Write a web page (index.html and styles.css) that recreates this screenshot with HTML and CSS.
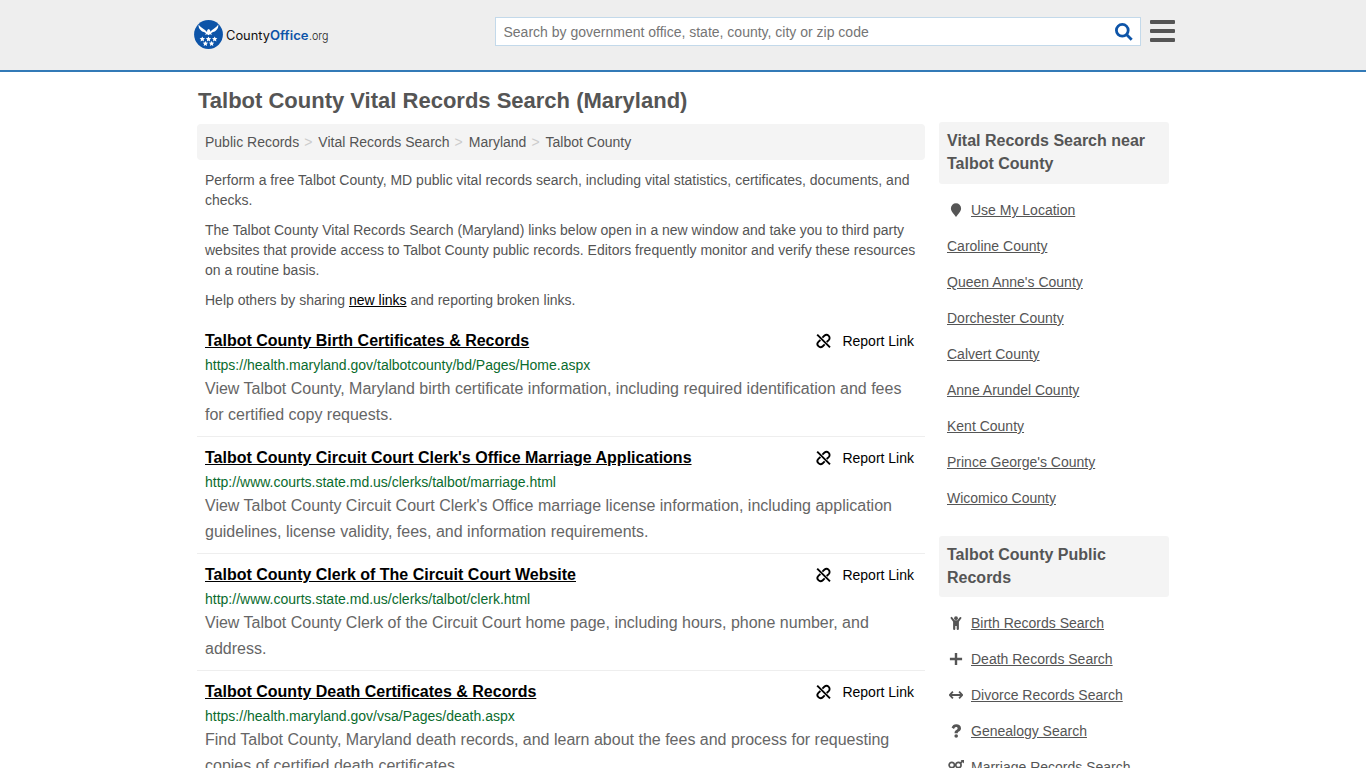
FILE: index.html
```html
<!DOCTYPE html>
<html lang="en">
<head>
  <meta charset="UTF-8">
  <title>Talbot County Vital Records Search (Maryland)</title>
  <link rel="stylesheet" href="styles.css">
</head>
<body>

  <!-- icons -->
  <svg class="sprite" xmlns="http://www.w3.org/2000/svg">
    <symbol id="unlink" viewBox="0 0 16 16">
      <g fill="none" stroke="#000" stroke-width="1.900">
        <path d="M2.200 1.600l12.800 12.800"/>
        <path d="M7.400 4.600L9.300 2.800c1.300-1.200 3.200-1.200 4.400 0s1.200 3.100 0 4.300L11.700 9"/>
        <path d="M9.700 11.400l-1.900 1.800c-1.300 1.200-3.200 1.200-4.400 0s-1.200-3.100 0-4.300L5.400 7"/>
      </g>
    </symbol>
    <symbol id="pin" viewBox="0 0 14 14"><path d="M7 .3a5.100 5.100 0 0 0-5.100 5.100c0 2.300 1.500 3.600 3.200 6.100L7 13.900l1.900-2.400c1.700-2.500 3.200-3.800 3.200-6.100A5.100 5.100 0 0 0 7 .3z"/></symbol>
    <symbol id="child" viewBox="0 0 14 14"><circle cx="7" cy="2.200" r="1.900"/><path d="M1.800 1.300a.9.9 0 0 1 1.400 0L5.600 4.200h2.800l2.400-2.900a.9.9 0 0 1 1.400 1.300L9.900 5.700v7.200a1 1 0 0 1-2.200 0V10H6.300v2.900a1 1 0 0 1-2.200 0V5.700L1.800 2.600a.9.9 0 0 1 0-1.300z"/></symbol>
    <symbol id="plus" viewBox="0 0 14 14"><path d="M5.800 1h2.400v4.800h4.900v2.400H8.200V13H5.800V8.200H.9V5.800h4.900z"/></symbol>
    <symbol id="arrows" viewBox="0 0 14 14"><path d="M3.900 3.700L.8 7l3.100 3.300M10.100 3.700L13.200 7l-3.100 3.300M1.200 7h11.600" fill="none" stroke="#555" stroke-width="1.800"/></symbol>
    <symbol id="question" viewBox="0 0 14 14"><path d="M2.600 3.500C3.500 1.400 4.900.2 7.200.2c2.700 0 4.800 1.500 4.800 4 0 3-3.200 3.200-3.200 4.600v.4H5.600v-.7c0-2.400 3-2.700 3-4.100 0-.8-.7-1.300-1.600-1.300S5.500 3.900 5 5z"/><circle cx="7.200" cy="12" r="1.800"/></symbol>
    <symbol id="genders" viewBox="0 0 16 14"><g fill="none" stroke="#555" stroke-width="1.700"><circle cx="3.800" cy="5" r="2.700"/><circle cx="10.400" cy="5" r="2.700"/><path d="M12.300 3.100L14.800 1M3.800 7.700V13M1.800 10.700h4"/></g><path d="M12.600 0H16v3.400z"/></symbol>
  </svg>

  <header class="header">
    <div class="wrap bar">
      <a class="logo" href="#">
        <svg width="140" height="30" viewBox="0 0 140 30">
          <circle cx="14.500" cy="14.500" r="14.400" fill="#0d54a8"/>
          <path fill="#fff" d="M4.600 4.600C6.300 7.200 8.600 8.500 11 9.900l2 2 .3-2 1.300-.8 1.500.9.100 1.700 1.900-1.800c2.400-1.400 4.500-2.700 6.200-5.300.2 2.100-.4 3.900-1.600 5.200-.9 1.200-2.100 1.900-3.700 2.300l-2 1.100 1.200 1.600-2.300-.5-1.400.9-1.400-.9-2.300.5 1.200-1.600-2-1.100c-1.600-.4-2.800-1.100-3.700-2.300C5 8.500 4.400 6.700 4.600 4.600z"/>
          <g fill="#fff">
            <path id="star" d="M8.300 16.400l.8 1.700 1.900.2-1.400 1.300.4 1.900-1.700-.9-1.700.9.400-1.900-1.400-1.300 1.900-.2z"/>
            <use href="#star" x="6.200"/>
            <use href="#star" x="12.400"/>
            <use href="#star" x="3.100" y="4.500"/>
            <use href="#star" x="9.300" y="4.500"/>
          </g>
          <text class="logo-text" x="32" y="20" textLength="44" lengthAdjust="spacingAndGlyphs">County</text>
          <text class="logo-text logo-blue" x="76" y="20" textLength="38.500" lengthAdjust="spacingAndGlyphs">Office</text>
          <text class="logo-text logo-org" x="115" y="20" textLength="19.500" lengthAdjust="spacingAndGlyphs">.org</text>
        </svg>
      </a>
      <form class="search">
        <input type="text" placeholder="Search by government office, state, county, city or zip code">
        <svg class="search-icon" width="18" height="18" viewBox="0 0 18 18"><circle cx="7.300" cy="7.300" r="5.900"/><path d="M11.500 11.500l5.200 5.200"/></svg>
      </form>
      <div class="menu"><span></span><span></span><span></span></div>
    </div>
  </header>

  <div class="wrap content">
    <main>
      <h1>Talbot County Vital Records Search (Maryland)</h1>
      <ul class="breadcrumb">
        <li>Public Records</li>
        <li>Vital Records Search</li>
        <li>Maryland</li>
        <li>Talbot County</li>
      </ul>
      <div class="intro">
        <p>Perform a free Talbot County, MD public vital records search, including vital statistics, certificates, documents, and checks.</p>
        <p>The Talbot County Vital Records Search (Maryland) links below open in a new window and take you to third party websites that provide access to Talbot County public records. Editors frequently monitor and verify these resources on a routine basis.</p>
        <p>Help others by sharing <a href="#">new links</a> and reporting broken links.</p>
      </div>

      <div class="record">
        <div class="record-head">
          <a href="#">Talbot County Birth Certificates &amp; Records</a>
          <span class="report"><svg width="16" height="16"><use href="#unlink"/></svg>Report Link</span>
        </div>
        <div class="url">https://health.maryland.gov/talbotcounty/bd/Pages/Home.aspx</div>
        <div class="desc">View Talbot County, Maryland birth certificate information, including required identification and fees for certified copy requests.</div>
      </div>
      <div class="record">
        <div class="record-head">
          <a href="#">Talbot County Circuit Court Clerk's Office Marriage Applications</a>
          <span class="report"><svg width="16" height="16"><use href="#unlink"/></svg>Report Link</span>
        </div>
        <div class="url">http://www.courts.state.md.us/clerks/talbot/marriage.html</div>
        <div class="desc">View Talbot County Circuit Court Clerk's Office marriage license information, including application guidelines, license validity, fees, and information requirements.</div>
      </div>
      <div class="record">
        <div class="record-head">
          <a href="#">Talbot County Clerk of The Circuit Court Website</a>
          <span class="report"><svg width="16" height="16"><use href="#unlink"/></svg>Report Link</span>
        </div>
        <div class="url">http://www.courts.state.md.us/clerks/talbot/clerk.html</div>
        <div class="desc">View Talbot County Clerk of the Circuit Court home page, including hours, phone number, and address.</div>
      </div>
      <div class="record">
        <div class="record-head">
          <a href="#">Talbot County Death Certificates &amp; Records</a>
          <span class="report"><svg width="16" height="16"><use href="#unlink"/></svg>Report Link</span>
        </div>
        <div class="url">https://health.maryland.gov/vsa/Pages/death.aspx</div>
        <div class="desc">Find Talbot County, Maryland death records, and learn about the fees and process for requesting copies of certified death certificates.</div>
      </div>
    </main>

    <aside>
      <h2>Vital Records Search near Talbot County</h2>
      <ul class="links">
        <li><svg width="14" height="14"><use href="#pin"/></svg><a href="#">Use My Location</a></li>
        <li><a href="#">Caroline County</a></li>
        <li><a href="#">Queen Anne's County</a></li>
        <li><a href="#">Dorchester County</a></li>
        <li><a href="#">Calvert County</a></li>
        <li><a href="#">Anne Arundel County</a></li>
        <li><a href="#">Kent County</a></li>
        <li><a href="#">Prince George's County</a></li>
        <li><a href="#">Wicomico County</a></li>
      </ul>
      <h2>Talbot County Public Records</h2>
      <ul class="links">
        <li><svg width="14" height="14"><use href="#child"/></svg><a href="#">Birth Records Search</a></li>
        <li><svg width="14" height="14"><use href="#plus"/></svg><a href="#">Death Records Search</a></li>
        <li><svg width="14" height="14"><use href="#arrows"/></svg><a href="#">Divorce Records Search</a></li>
        <li><svg width="14" height="14"><use href="#question"/></svg><a href="#">Genealogy Search</a></li>
        <li><svg class="wide" width="16" height="14"><use href="#genders"/></svg><a href="#">Marriage Records Search</a></li>
      </ul>
    </aside>
  </div>

</body>
</html>
```
FILE: styles.css
```css
* { box-sizing: border-box; }
body {
  margin: 0;
  height: 768px;
  overflow: hidden;
  background: #fff;
  color: #555;
  font-family: "Liberation Sans", Arial, sans-serif;
  font-size: 14px;
  line-height: 20px;
}
h1, h2, p, ul { margin: 0; padding: 0; }
ul { list-style: none; }
.sprite { display: none; }
.wrap { width: 972px; margin-left: 197px; }

/* header */
.header {
  height: 72px;
  background: #eee;
  border-bottom: 2px solid #337ab7;
}
.bar { display: flex; align-items: flex-start; width: 980px; }
.logo { flex: none; width: 301px; margin: 20px 0 0 -3px; }
.logo svg { display: block; overflow: visible; }
.logo-text { font: 12.5px Inter, sans-serif; fill: #111; }
.logo-blue { font-weight: 600; fill: #0d54a8; }
.logo-org { font-weight: 300; fill: #222; }
.search {
  display: flex;
  flex: none;
  align-items: center;
  width: 646px;
  height: 29px;
  margin-top: 17px;
  padding-right: 7px;
  background: #fff;
  border: 1px solid #c3d9ea;
}
.search input {
  flex: 1;
  padding: 0 0 0 7.5px;
  border: 0;
  outline: 0;
  background: none;
  font: 14px "Liberation Sans", Arial, sans-serif;
}
.search input::placeholder { color: #757575; }
.search-icon { fill: none; stroke: #0d54a8; stroke-width: 2.8; }
.menu {
  display: flex;
  flex-direction: column;
  gap: 5px;
  margin: 20px 0 0 9px;
}
.menu span { width: 25px; height: 4px; background: #555; border-radius: 1px; }

/* main column */
.content { display: flex; gap: 14px; }
main { width: 728px; }
h1 {
  padding: 17px 0 11px 1px;
  font-size: 22px;
  line-height: 24px;
}
.breadcrumb {
  display: flex;
  height: 36px;
  padding: 8px;
  background: #f4f4f4;
  border-radius: 4px;
}
.breadcrumb li + li::before { content: ">"; padding: 0 6px 0 5px; color: #ccc; }
.intro { padding: 10px 8px; }
.intro p { margin-bottom: 10px; }
.intro p:last-child { margin-bottom: 0; }
.intro a { color: #000; }
.record { padding: 8px 8px; border-bottom: 1px solid #eee; }
.record-head { display: flex; justify-content: space-between; height: 27px; line-height: 25px; }
.record-head a { color: #000; font-size: 16px; font-weight: bold; }
.report { display: flex; align-items: center; height: 27px; padding-right: 3px; color: #000; }
.report svg { margin: -1px 11px 0 0; }
.url { height: 21px; color: #0a6b2d; }
.desc { font-size: 16px; line-height: 26px; color: #666; }

/* sidebar */
aside { width: 230px; padding-top: 50px; }
h2 {
  height: 62px;
  padding: 7px 8px;
  background: #f4f4f4;
  border-radius: 3px;
  font-size: 16px;
  line-height: 23px;
}
.links { padding: 8px 8px 20px; }
.links + h2 { height: 61px; }
.links li { display: flex; align-items: center; height: 36px; }
.links svg { margin: 0 8px 0 2px; fill: #555; }
.links svg.wide { margin: 0 7px 0 1px; }
.links a { color: #555; }
```
